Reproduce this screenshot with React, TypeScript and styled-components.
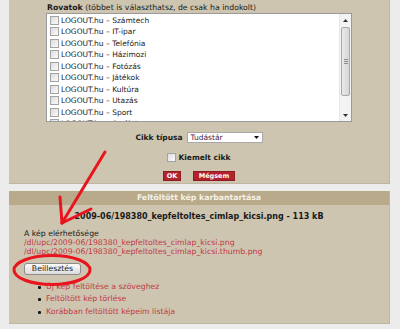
import React from "react";
import styled, { createGlobalStyle } from "styled-components";

const Global = createGlobalStyle`
  html, body { margin: 0; padding: 0; background: #ececec; }
  body { font-family: "DejaVu Sans", Verdana, sans-serif; font-size: 7.75px; color: #1a1a1a; }
`;

const Page = styled.div`
  position: relative;
  width: 400px;
  height: 329px;
  overflow: hidden;
  background: #ececec;
`;

const Panel = styled.div<{ $top?: boolean }>`
  margin-left: 9px;
  width: 381px;
  box-sizing: border-box;
  background: #cdc5b0;
  border-right: 1px solid #bfb69f;
  border-bottom: 1px solid #bfb69f;
  margin-top: ${(p) => (p.$top ? "0" : "7px")};
`;

const Form = styled.div`
  width: 306px;
  margin: 0 auto;
  padding: 3px 0 2px;
  display: flex;
  flex-direction: column;
  align-items: stretch;
`;

const Legend = styled.div`
  line-height: 10px;
  height: 10px;
  padding-left: 1px;
  white-space: nowrap;
  b { font-weight: bold; }
`;

const ListBox = styled.div`
  height: 109px;
  box-sizing: border-box;
  border: 1px solid #9a9a9a;
  background: #fff;
  display: flex;
  overflow: hidden;
`;

const ListItems = styled.div`
  flex: 1;
  padding-top: 0.5px;
  overflow: hidden;
  font-size: 7.5px;
`;

const ListRow = styled.div`
  height: 11.5px;
  display: flex;
  align-items: center;
  white-space: nowrap;
`;

const Check = styled.span<{ $ml?: number }>`
  display: inline-block;
  width: 9px;
  height: 9px;
  box-sizing: border-box;
  border: 1px solid #a3a3a3;
  background: linear-gradient(135deg, #dcdcdc, #fbfbfb);
  margin-left: ${(p) => p.$ml ?? 3}px;
  margin-right: 2px;
  flex: none;
`;

const ScrollBar = styled.div`
  width: 11px;
  background: #f3f3f3;
  border-left: 1px solid #e6e6e6;
  display: flex;
  flex-direction: column;
  align-items: center;
`;

const ScrollBtn = styled.div`
  width: 10px;
  height: 12px;
  display: flex;
  align-items: center;
  justify-content: center;
`;

const Thumb = styled.div`
  margin-top: 1px;
  width: 9px;
  height: 69px;
  box-sizing: border-box;
  border: 1px solid #a9a9a9;
  border-radius: 2px;
  background: linear-gradient(90deg, #e9e9e9, #d6d6d6);
  display: flex;
  flex-direction: column;
  align-items: center;
  justify-content: center;
  gap: 1px;
`;

const Grip = styled.span`
  width: 4px;
  height: 1px;
  background: #8d8d8d;
`;

const Spacer = styled.div`
  flex: 1;
`;

const CenterRow = styled.div<{ $mt: number; $gap?: number }>`
  margin-top: ${(p) => p.$mt}px;
  display: flex;
  justify-content: center;
  align-items: center;
  gap: ${(p) => p.$gap ?? 0}px;
  height: 10px;
`;

const BoldLabel = styled.span`
  font-weight: bold;
  white-space: nowrap;
  font-size: 7.5px;
`;

const Select = styled.div`
  width: 76px;
  height: 11px;
  box-sizing: border-box;
  border: 1px solid #a8a8a8;
  background: #fff;
  display: flex;
  align-items: center;
  padding: 0 3px 0 3px;
  color: #3d2550;
  line-height: 9px;
  font-size: 7.5px;
`;

const RedButton = styled.span<{ $w: number }>`
  width: ${(p) => p.$w}px;
  height: 10px;
  box-sizing: border-box;
  background: #b3232d;
  border: 1px solid #8a1c22;
  color: #fff;
  font-weight: bold;
  font-size: 6.5px;
  line-height: 8px;
  text-align: center;
`;

const PanelHeader = styled.div`
  height: 14px;
  background: #b8aa8b;
  color: #f6f1e4;
  font-weight: bold;
  text-align: center;
  line-height: 14px;
`;

const PanelBody = styled.div`
  padding: 7px 0 0 15px;
  height: 118px;
  box-sizing: border-box;
`;

const FileName = styled.div`
  font-weight: bold;
  font-size: 8px;
  text-align: center;
  line-height: 10px;
  margin-left: -15px;
  white-space: nowrap;
`;

const AccessLabel = styled.div`
  margin-top: 7px;
  line-height: 10px;
`;

const PathLink = styled.div`
  color: #c13a46;
  line-height: 8.5px;
  white-space: nowrap;
`;

const InsertButton = styled.div`
  margin-top: 7px;
  width: 57px;
  height: 12px;
  box-sizing: border-box;
  border: 1px solid #8c8c8c;
  border-radius: 3px;
  background: linear-gradient(#fbfbfb, #dcdcdc);
  text-align: center;
  line-height: 10px;
  color: #1a1a1a;
`;

const ActionList = styled.ul`
  margin: 5.75px 0 0 0;
  padding: 0;
  list-style: none;
`;

const ActionItem = styled.li`
  height: 12.5px;
  line-height: 12.5px;
  display: flex;
  align-items: center;
  color: #c13a46;
  &::before {
    content: "";
    width: 3px;
    height: 3px;
    border-radius: 1px;
    background: #1a1a1a;
    margin-left: 14px;
    margin-right: 5px;
  }
`;

const Annotation = styled.svg`
  position: absolute;
  left: 0;
  top: 0;
  pointer-events: none;
`;

const rovatok = [
  "Számtech",
  "IT-ipar",
  "Telefónia",
  "Házimozi",
  "Fotózás",
  "Játékok",
  "Kultúra",
  "Utazás",
  "Sport",
  "Az élet",
];

export default function App() {
  return (
    <Page>
      <Global />
      <Panel $top>
        <Form>
          <Legend>
            <b>Rovatok</b> (többet is választhatsz, de csak ha indokolt)
          </Legend>
          <ListBox>
            <ListItems>
              {rovatok.map((r) => (
                <ListRow key={r}>
                  <Check />
                  LOGOUT.hu – {r}
                </ListRow>
              ))}
            </ListItems>
            <ScrollBar>
              <ScrollBtn>
                <svg width="5" height="3" viewBox="0 0 5 3">
                  <path d="M0 3 L2.5 0 L5 3 Z" fill="#333" />
                </svg>
              </ScrollBtn>
              <Thumb>
                <Grip />
                <Grip />
                <Grip />
              </Thumb>
              <Spacer />
              <ScrollBtn>
                <svg width="5" height="3" viewBox="0 0 5 3">
                  <path d="M0 0 L2.5 3 L5 0 Z" fill="#333" />
                </svg>
              </ScrollBtn>
            </ScrollBar>
          </ListBox>
          <CenterRow $mt={10} $gap={4}>
            <BoldLabel>Cikk típusa</BoldLabel>
            <Select>
              <span>Tudástár</span>
              <Spacer />
              <svg width="5" height="3" viewBox="0 0 5 3">
                <path d="M0 0 L2.5 3 L5 0 Z" fill="#111" />
              </svg>
            </Select>
          </CenterRow>
          <CenterRow $mt={10}>
            <Check $ml={0} />
            <BoldLabel>Kiemelt cikk</BoldLabel>
          </CenterRow>
          <CenterRow $mt={9} $gap={12}>
            <RedButton $w={18}>OK</RedButton>
            <RedButton $w={42}>Mégsem</RedButton>
          </CenterRow>
        </Form>
      </Panel>
      <Panel>
        <PanelHeader>Feltöltött kép karbantartása</PanelHeader>
        <PanelBody>
          <FileName>2009-06/198380_kepfeltoltes_cimlap_kicsi.png - 113 kB</FileName>
          <AccessLabel>A kép elérhetősége</AccessLabel>
          <PathLink>/dl/upc/2009-06/198380_kepfeltoltes_cimlap_kicsi.png</PathLink>
          <PathLink>/dl/upc/2009-06/198380_kepfeltoltes_cimlap_kicsi.thumb.png</PathLink>
          <InsertButton>Beillesztés</InsertButton>
          <ActionList>
            <ActionItem>Új kép feltöltése a szöveghez</ActionItem>
            <ActionItem>Feltöltött kép törlése</ActionItem>
            <ActionItem>Korábban feltöltött képeim listája</ActionItem>
          </ActionList>
        </PanelBody>
      </Panel>
      <Annotation width="400" height="329" viewBox="0 0 400 329">
        <g stroke="#e8141e" strokeWidth="3" strokeLinecap="round" fill="none">
          <path d="M105 152 L62 223" />
          <path d="M62 223 L60 197" />
          <path d="M62 223 L91 209" />
          <ellipse cx="52" cy="270" rx="38" ry="14.5" />
        </g>
      </Annotation>
    </Page>
  );
}
